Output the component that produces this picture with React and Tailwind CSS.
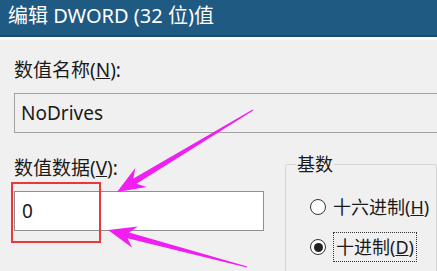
import React from "react";

// arrow polygon from tail to tip, tapering shaft + dart head
function arrowPoints(tail, tip, headLen = 28, headHalf = 11, shaftHalf = 3) {
  const dx = tip[0] - tail[0];
  const dy = tip[1] - tail[1];
  const len = Math.hypot(dx, dy);
  const ux = dx / len;
  const uy = dy / len;
  const nx = -uy;
  const ny = ux;
  const bx = tip[0] - ux * headLen;
  const by = tip[1] - uy * headLen;
  const bx2 = tip[0] - ux * (headLen - 7);
  const by2 = tip[1] - uy * (headLen - 7);
  const pts = [
    [tail[0] + nx * 0.6, tail[1] + ny * 0.6],
    [bx2 + nx * shaftHalf, by2 + ny * shaftHalf],
    [bx + nx * headHalf, by + ny * headHalf],
    tip,
    [bx - nx * headHalf, by - ny * headHalf],
    [bx2 - nx * shaftHalf, by2 - ny * shaftHalf],
    [tail[0] - nx * 0.6, tail[1] - ny * 0.6],
  ];
  return pts.map((p) => p[0].toFixed(1) + "," + p[1].toFixed(1)).join(" ");
}

export default function App() {
  return (
    <div
      className="relative w-[437px] h-[271px] overflow-hidden bg-[#f0f0f0] text-[#1a1a1a]"
      style={{ fontFamily: '"Noto Sans", "Noto Sans CJK SC", sans-serif' }}
    >
      <div className="h-[37px] bg-[#1f5a82] border-b-2 border-[#194b6d] pl-2 pt-[5px] text-white text-[20px] leading-[22px]">
        编辑 DWORD (32 位)值
      </div>
      <div className="h-[3px] bg-[#fafafa]" />

      <div className="pl-[14px] pt-[18px]">
        <div className="text-[19px] leading-[24px]">
          数值名称(<span className="underline">N</span>):
        </div>
        <div className="mt-[11px] h-[40px] w-[440px] border border-[#a3a3a3] bg-[#f0f0f0] flex items-center pl-[6px] text-[19px]">
          NoDrives
        </div>

        <div className="flex">
          <div className="w-[250px] shrink-0">
            <div className="mt-[23px] text-[19px] leading-[24px]">
              数值数据(<span className="underline">V</span>):
            </div>
            <div className="mt-[11px] h-[40px] border border-[#8f8f8f] bg-white flex items-center pl-[7px] text-[19px]">
              0
            </div>
          </div>

          <fieldset className="ml-[21px] mt-[21px] w-[200px] h-[120px] border border-[#d5d5d5] rounded-[2px] pl-[24px]">
            <legend className="-ml-[14px] px-[1px] text-[18px] leading-[20px]">基数</legend>
            <div className="mt-[21px] flex items-center text-[18px] leading-[24px] whitespace-nowrap">
              <span className="w-[16px] h-[16px] rounded-full border-[1.5px] border-[#333] bg-white mr-[7px] shrink-0" />
              十六进制(<span className="underline">H</span>)
            </div>
            <div className="mt-[13px] flex items-center text-[18px] leading-[24px] whitespace-nowrap">
              <span className="w-[16px] h-[16px] rounded-full border-[1.5px] border-[#333] bg-white mr-[7px] shrink-0 flex items-center justify-center">
                <span className="w-[9px] h-[9px] rounded-full bg-[#222]" />
              </span>
              <span className="border border-dotted border-[#333] px-[2px] leading-[28px]">
                十进制(<span className="underline">D</span>)
              </span>
            </div>
          </fieldset>
        </div>
      </div>

      {/* annotation overlay */}
      <div className="absolute left-[11px] top-[182px] w-[90px] h-[61px] border-2 border-[#e8383d]" />
      <svg className="absolute inset-0 pointer-events-none" width="437" height="271">
        <polygon points={arrowPoints([253, 110], [117, 192])} fill="#f01ef0" />
        <polygon points={arrowPoints([247, 267], [108, 230])} fill="#f01ef0" />
      </svg>
    </div>
  );
}
